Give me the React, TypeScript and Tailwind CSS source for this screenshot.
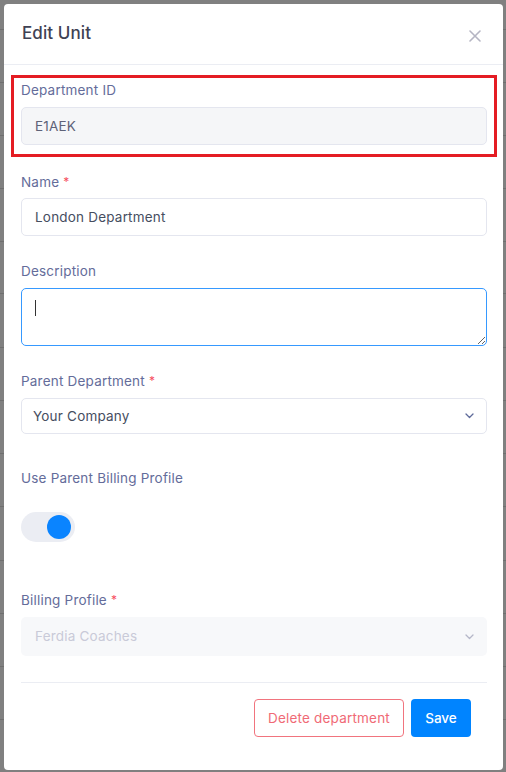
import React from "react";

const rows = [29, 82, 135, 188, 241, 293, 347, 400, 453, 506, 560, 613, 666, 719];

function Label({ text, required }: { text: string; required?: boolean }) {
  return (
    <div className="h-5 text-[13.5px] leading-5 tracking-[0.2px] text-[#646c9a] flex items-center">
      <span>{text}</span>
      {required && <span className="ml-1 text-[#f64e60] text-[12px]">*</span>}
    </div>
  );
}

function Chevron({ color }: { color: string }) {
  return (
    <svg width="9" height="6" viewBox="0 0 9 6" fill="none">
      <path d="M1 1l3.5 3.5L8 1" stroke={color} strokeWidth="1.3" strokeLinecap="round" strokeLinejoin="round" />
    </svg>
  );
}

export default function App() {
  return (
    <div
      className="relative w-[506px] h-[772px] bg-[#808080] overflow-hidden"
      style={{ fontFamily: "Inter, 'Open Sans', sans-serif" }}
    >
      {rows.map((y) => (
        <div key={y} className="absolute left-0 right-0 h-px bg-[#6f6f6f]" style={{ top: y }} />
      ))}
      <div className="absolute left-[4px] top-[4px] w-[499px] h-[766px] bg-white rounded-[4px] flex flex-col">
        {/* header */}
        <div className="h-[61px] border-b border-[#ebedf3] flex items-center justify-between pl-[18px] pr-[22px] shrink-0">
          <div className="text-[17px] font-medium text-[#3f4254] tracking-[0.1px]">Edit Unit</div>
          <svg width="12" height="12" viewBox="0 0 12 12" className="mt-[3px]">
            <path d="M1 1l10 10M11 1L1 11" stroke="#b5b5c3" strokeWidth="1.6" strokeLinecap="round" />
          </svg>
        </div>
        {/* body */}
        <div className="pl-[17px] pr-[16px] flex flex-col">
          <div className="relative pt-[15px]">
            <div className="absolute left-[-10px] right-[-10px] top-[10px] h-[82px] border-[3px] border-[#e41c23] pointer-events-none" />
            <Label text="Department ID" />
            <div className="mt-[7px] h-[38px] rounded-[5px] border border-[#e4e6ef] bg-[#f5f6f8] flex items-center pl-[13px] text-[13.5px] tracking-[0.2px] text-[#5e6278]">
              E1AEK
            </div>
          </div>

          <div className="mt-[27px]">
            <Label text="Name" required />
            <div className="mt-[6px] h-[38px] rounded-[5px] border border-[#e4e6ef] bg-white flex items-center pl-[13px] text-[13.5px] tracking-[0.2px] text-[#464e5f]">
              London Department
            </div>
          </div>

          <div className="mt-[25px]">
            <Label text="Description" />
            <div className="relative mt-[7px] h-[58px]">
              <textarea
                className="w-full h-full rounded-[5px] border border-[#3699ff] bg-white outline-none block resize-y"
                readOnly
              />
              <div className="absolute left-[14px] top-[12px] w-px h-[16px] bg-[#333]" />
            </div>
          </div>

          <div className="mt-[25px]">
            <Label text="Parent Department" required />
            <div className="mt-[7px] h-[36px] rounded-[5px] border border-[#e4e6ef] bg-white flex items-center justify-between pl-[11px] pr-[12px] text-[13.5px] tracking-[0.2px] text-[#464e5f]">
              <span>Your Company</span>
              <Chevron color="#5e6a9a" />
            </div>
          </div>

          <div className="mt-[34px]">
            <Label text="Use Parent Billing Profile" />
            <div className="mt-[24px] w-[54px] h-[30px] rounded-full bg-[#ebedf3] flex items-center justify-end pr-[4px]">
              <div className="w-[24px] h-[24px] rounded-full bg-[#0a84ff]" />
            </div>
          </div>

          <div className="mt-[48px]">
            <Label text="Billing Profile" required />
            <div className="mt-[7px] h-[39px] rounded-[5px] bg-[#f7f8fa] flex items-center justify-between pl-[14px] pr-[13px] text-[13.5px] tracking-[0.2px] text-[#c9cad8]">
              <span>Ferdia Coaches</span>
              <Chevron color="#b5b7c8" />
            </div>
          </div>

          <div className="mt-[26px] h-px bg-[#ebedf3]" />

          <div className="mt-[16px] flex justify-end pr-[16px] gap-[7px]">
            <button className="h-[38px] px-[13px] rounded-[4px] border border-[#f1747e] text-[#f06a76] text-[13.5px] tracking-[0.2px] bg-white">
              Delete department
            </button>
            <button className="h-[38px] w-[60px] rounded-[4px] bg-[#0084ff] text-white text-[13.5px] font-medium">
              Save
            </button>
          </div>
        </div>
      </div>
    </div>
  );
}
